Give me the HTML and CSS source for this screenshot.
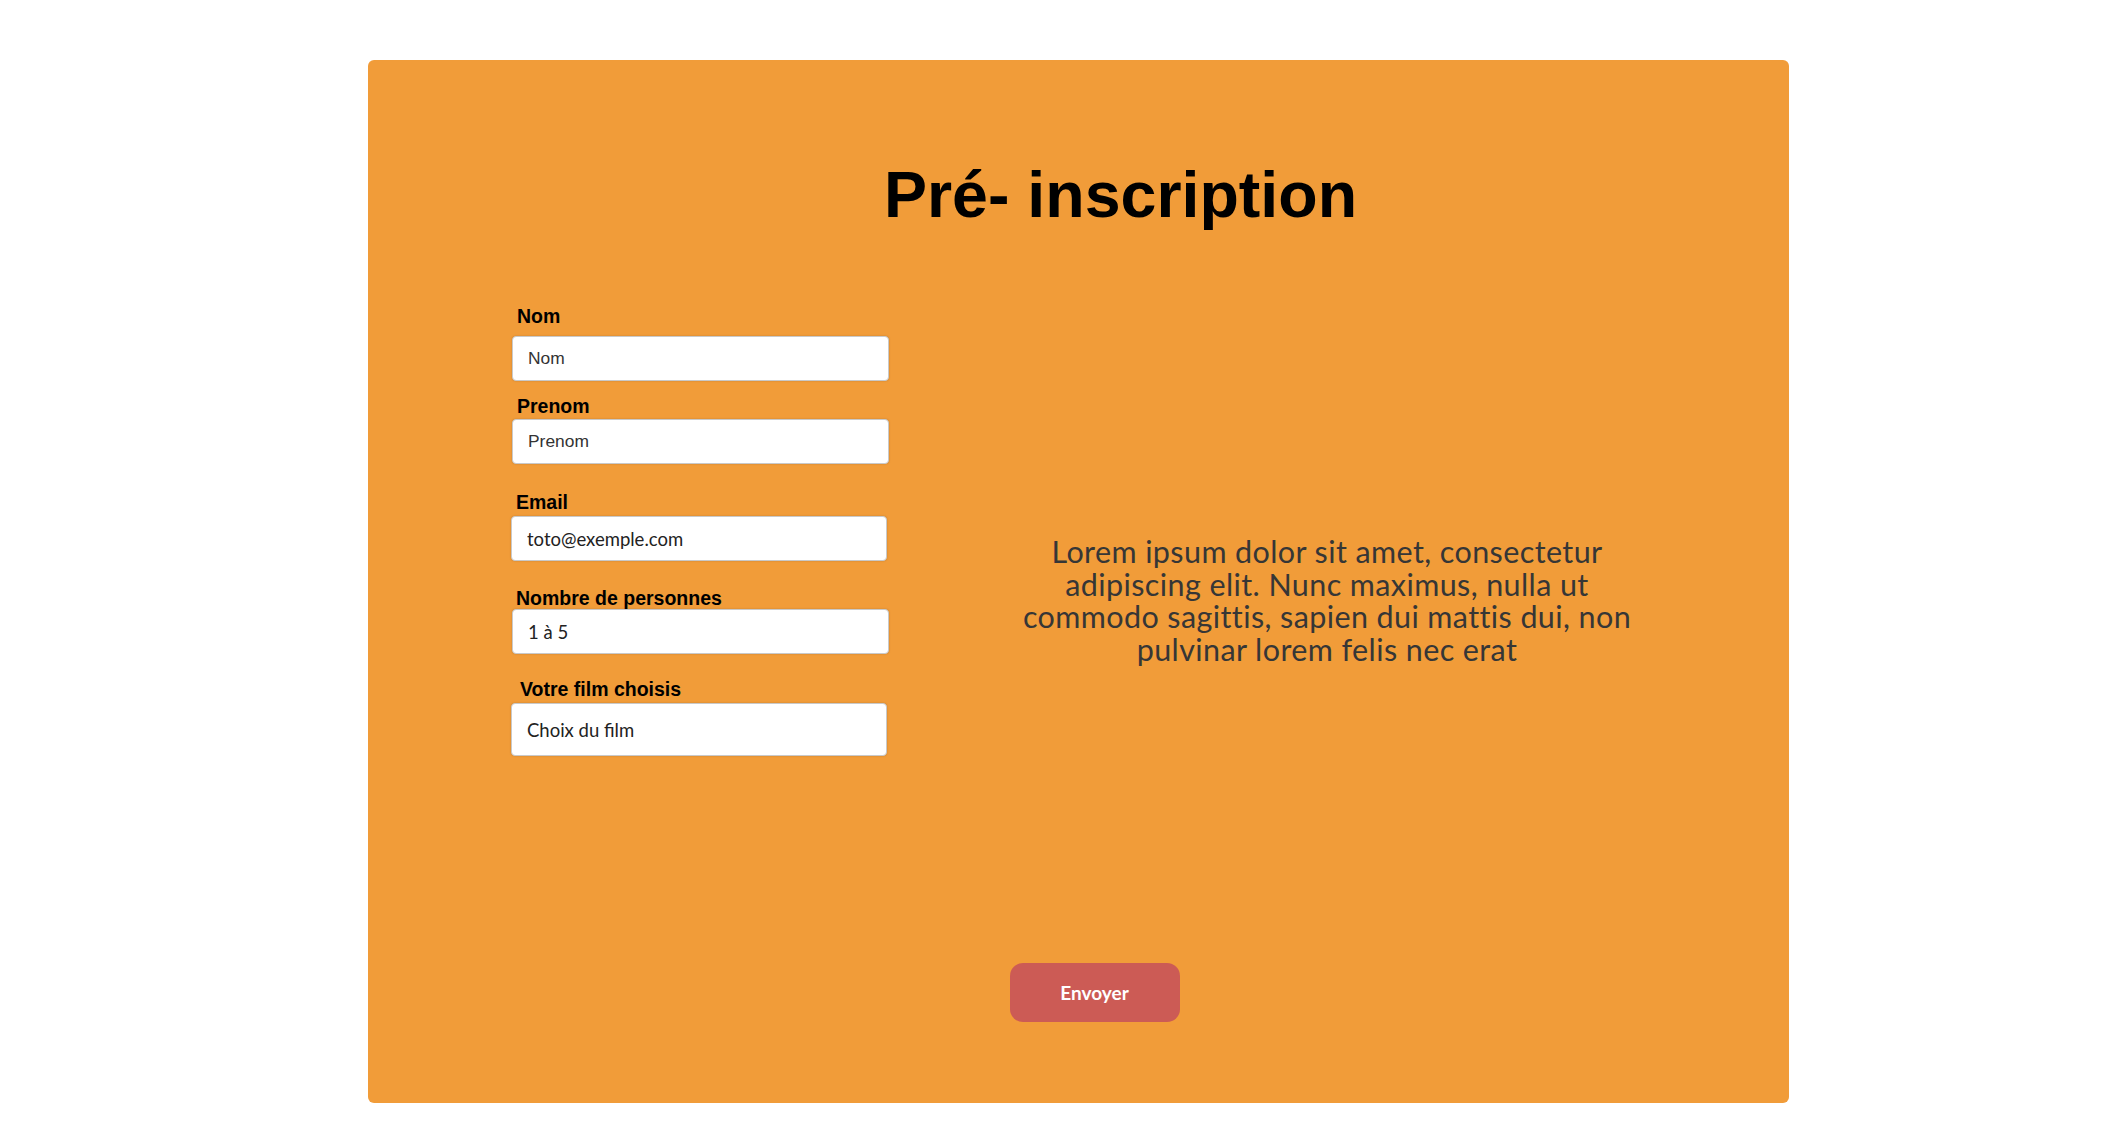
FILE: index.html
```html
<!DOCTYPE html>
<html lang="fr">
<head>
<meta charset="utf-8">
<title>Pré-inscription</title>
<link rel="stylesheet" href="styles.css">
</head>
<body>
<main class="card">
  <h1 class="title">Pré- inscription</h1>
  <div class="content">
    <form class="form">
      <div class="field field--nom">
        <label class="label" for="nom">Nom</label>
        <input class="input input--arial" id="nom" type="text" placeholder="Nom">
      </div>
      <div class="field field--prenom">
        <label class="label" for="prenom">Prenom</label>
        <input class="input input--arial" id="prenom" type="text" placeholder="Prenom">
      </div>
      <div class="field field--email">
        <label class="label" for="email">Email</label>
        <input class="input input--shift" id="email" type="email" placeholder="toto@exemple.com">
      </div>
      <div class="field field--nombre">
        <label class="label" for="nombre">Nombre de personnes</label>
        <input class="input" id="nombre" type="text" placeholder="1 à 5">
      </div>
      <div class="field field--film">
        <label class="label" for="film">Votre film choisis</label>
        <input class="input input--shift input--tall" id="film" type="text" placeholder="Choix du film">
      </div>
    </form>
    <p class="aside">Lorem ipsum dolor sit amet, consectetur<br>adipiscing elit. Nunc maximus, nulla ut<br>commodo sagittis, sapien dui mattis dui, non<br>pulvinar lorem felis nec erat</p>
  </div>
  <div class="actions">
    <button class="button" type="button">Envoyer</button>
  </div>
</main>
</body>
</html>
```
FILE: styles.css
```css
html, body {
  margin: 0;
  padding: 0;
  background: #ffffff;
}

body {
  font-family: "Liberation Sans", Arial, sans-serif;
}

.card {
  box-sizing: border-box;
  width: 1421px;
  height: 1043px;
  margin: 60px 0 0 368px;
  padding-top: 98px;
  background: #f19c39;
  border-radius: 6px;
}

.title {
  margin: 0;
  padding-left: 84px;
  font-family: "Liberation Sans", Arial, sans-serif;
  font-size: 64.5px;
  line-height: 74px;
  font-weight: 700;
  color: #000;
  text-align: center;
}

.content {
  display: flex;
  align-items: flex-start;
  margin-top: 73px;
}

.form {
  display: flex;
  flex-direction: column;
  width: 378px;
  margin: 0 0 0 143px;
}

.field {
  display: flex;
  flex-direction: column;
}

.label {
  display: block;
  font-family: "Liberation Sans", Arial, sans-serif;
  font-weight: 700;
  font-size: 19.5px;
  line-height: 22px;
  color: #000;
  margin-left: 6px;
}

.input {
  box-sizing: border-box;
  width: 377px;
  height: 45px;
  margin-left: 1px;
  padding: 0 15px;
  border: 1px solid #c9c9c9;
  border-radius: 4px;
  background: #fff;
  box-shadow: 0 0 2px rgba(0, 0, 0, 0.18);
  font-family: Lato, "Open Sans", sans-serif;
  font-size: 18.5px;
  color: #222;
  outline: none;
}

.input::placeholder {
  color: #222;
  opacity: 1;
}

.input--arial {
  font-family: "Liberation Sans", Arial, sans-serif;
  font-size: 17.4px;
}

.input--arial::placeholder {
  color: #333;
}

.input--shift {
  margin-left: 0;
  width: 376px;
}

.input--tall {
  height: 53px;
}

.field--nom .input {
  margin-top: 9px;
}

.field--prenom {
  margin-top: 14px;
}

.field--prenom .input {
  margin-top: 2px;
}

.field--email {
  margin-top: 27px;
}

.field--email .label {
  margin-left: 5px;
}

.field--email .input {
  margin-top: 3px;
}

.field--nombre {
  margin-top: 26px;
}

.field--nombre .label {
  margin-left: 5px;
}

.field--nombre .input {
  margin-top: 0;
}

.field--film {
  margin-top: 24px;
}

.field--film .label {
  margin-left: 9px;
}

.field--film .input {
  margin-top: 3px;
}

.aside {
  width: 680px;
  margin: 230px 0 0 98px;
  font-family: Lato, "Open Sans", sans-serif;
  font-size: 30.5px;
  letter-spacing: 0.4px;
  line-height: 32.5px;
  color: #363636;
  text-align: center;
}

.actions {
  display: flex;
  justify-content: center;
  padding-left: 32px;
  margin-top: 207px;
}

.button {
  width: 170px;
  height: 59px;
  border: none;
  border-radius: 13px;
  background: #cc5b55;
  color: #fff;
  font-family: Lato, "Open Sans", sans-serif;
  font-weight: 700;
  font-size: 19px;
  cursor: pointer;
}
```
